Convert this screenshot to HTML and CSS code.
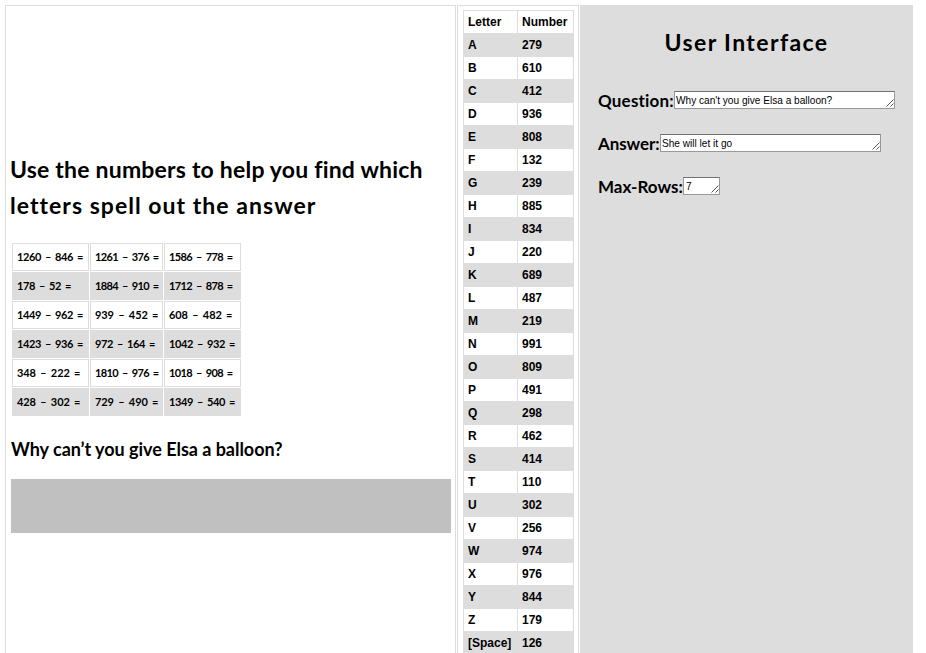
FILE: index.html
```
<!DOCTYPE html>
<html lang="en">
<head>
<meta charset="utf-8">
<title>Letter Puzzle</title>
<link rel="stylesheet" href="styles.css">
</head>
<body>
<main class="layout">
  <section class="puzzle">
    <h1><span class="line-one">Use the numbers to help you find which</span><br><span class="line-two">letters spell out the answer</span></h1>
    <table class="sums">
      <tr><td>1260 – 846 =</td><td class="tight">1261 – 376 =</td><td class="tight">1586 – 778 =</td></tr>
      <tr><td>178 – 52 =</td><td class="tight">1884 – 910 =</td><td class="tight">1712 – 878 =</td></tr>
      <tr><td>1449 – 962 =</td><td class="wide">939 – 452 =</td><td class="wide">608 – 482 =</td></tr>
      <tr><td>1423 – 936 =</td><td>972 – 164 =</td><td>1042 – 932 =</td></tr>
      <tr><td class="wide">348 – 222 =</td><td class="tight">1810 – 976 =</td><td class="tight">1018 – 908 =</td></tr>
      <tr><td class="wide">428 – 302 =</td><td class="wide">729 – 490 =</td><td>1349 – 540 =</td></tr>
    </table>
    <h2>Why can’t you give Elsa a balloon?</h2>
    <div class="answer-box"></div>
  </section>
  <section class="key">
    <table>
      <tr><th>Letter</th><th>Number</th></tr>
      <tr><td>A</td><td>279</td></tr>
      <tr><td>B</td><td>610</td></tr>
      <tr><td>C</td><td>412</td></tr>
      <tr><td>D</td><td>936</td></tr>
      <tr><td>E</td><td>808</td></tr>
      <tr><td>F</td><td>132</td></tr>
      <tr><td>G</td><td>239</td></tr>
      <tr><td>H</td><td>885</td></tr>
      <tr><td>I</td><td>834</td></tr>
      <tr><td>J</td><td>220</td></tr>
      <tr><td>K</td><td>689</td></tr>
      <tr><td>L</td><td>487</td></tr>
      <tr><td>M</td><td>219</td></tr>
      <tr><td>N</td><td>991</td></tr>
      <tr><td>O</td><td>809</td></tr>
      <tr><td>P</td><td>491</td></tr>
      <tr><td>Q</td><td>298</td></tr>
      <tr><td>R</td><td>462</td></tr>
      <tr><td>S</td><td>414</td></tr>
      <tr><td>T</td><td>110</td></tr>
      <tr><td>U</td><td>302</td></tr>
      <tr><td>V</td><td>256</td></tr>
      <tr><td>W</td><td>974</td></tr>
      <tr><td>X</td><td>976</td></tr>
      <tr><td>Y</td><td>844</td></tr>
      <tr><td>Z</td><td>179</td></tr>
      <tr><td>[Space]</td><td>126</td></tr>
    </table>
  </section>
  <section class="controls">
    <h1>User Interface</h1>
    <div class="field"><label class="l-question" for="q">Question:</label><div class="box"><textarea id="q" rows="1">Why can't you give Elsa a balloon?</textarea><svg class="grip" viewBox="0 0 8 8"><path d="M0.5 7.5L7.5 0.5M4.5 7.5L7.5 4.5"/></svg></div></div>
    <div class="field"><label class="l-answer" for="a">Answer:</label><div class="box"><textarea id="a" rows="1">She will let it go</textarea><svg class="grip" viewBox="0 0 8 8"><path d="M0.5 7.5L7.5 0.5M4.5 7.5L7.5 4.5"/></svg></div></div>
    <div class="field"><label class="l-rows" for="m">Max-Rows:</label><div class="box small"><textarea id="m" rows="1">7</textarea><svg class="grip" viewBox="0 0 8 8"><path d="M0.5 7.5L7.5 0.5M4.5 7.5L7.5 4.5"/></svg></div></div>
  </section>
</main>
</body>
</html>
```
FILE: styles.css
```
* { box-sizing: border-box; }
body { margin: 0; background: #fff; color: #000; overflow: hidden; font-family: Lato, sans-serif; }
h1, h2 { margin: 0; white-space: nowrap; }
.layout { display: flex; align-items: stretch; height: 653px; padding: 5px 0 0 5px; overflow: hidden; }
.puzzle { width: 451px; height: 660px; padding: 145px 4px 0 5px; border: 1px solid #ddd; }
.puzzle h1 { font-size: 23px; line-height: 36px; font-weight: 700; margin-left: -1px; }
.line-one { letter-spacing: 0.2px; }
.line-two { letter-spacing: 1.03px; }
.sums { margin-top: 19px; border-collapse: separate; border-spacing: 1px; table-layout: fixed; width: 231px; font-size: 11px; font-weight: 700; letter-spacing: -0.4px; word-spacing: 1.8px; }
.sums td { height: 28px; padding: 0 4px; border: 1px solid #ddd; white-space: nowrap; line-height: 16px; }
.sums td:nth-child(1), .sums td:nth-child(3) { width: 77px; }
.sums td:nth-child(2) { width: 73px; }
.sums tr:nth-child(even) td { background: #ddd; }
.sums .tight { letter-spacing: -0.6px; }
.sums .wide { letter-spacing: -0.1px; }
.puzzle h2 { margin-top: 19px; font-size: 18px; line-height: 26px; font-weight: 700; letter-spacing: -0.03px; }
.answer-box { height: 54px; margin-top: 17px; background: #c0c0c0; }
.key { width: 122px; height: 660px; margin-left: 1px; padding: 4px 0 0 5px; border: 1px solid #ddd; }
.key table { width: 111px; border-collapse: collapse; table-layout: fixed; font: bold 12px/14px "Liberation Sans", sans-serif; }
.key th, .key td { height: 23px; padding: 0 4px; border: 1px solid #ddd; text-align: left; }
.key th:first-child { width: 54px; }
.key tr:nth-child(even) td { background: #ddd; }
.controls { width: 333px; height: 660px; margin-left: 1px; padding: 19px 18px 0; background: #ddd; }
.controls h1 { font-size: 23px; line-height: 36px; text-align: center; letter-spacing: 1.4px; }
.field { display: flex; align-items: flex-start; height: 18px; margin-bottom: 25px; }
.controls h1 + .field { margin-top: 31px; }
.field label { flex: none; font-size: 17px; line-height: 20px; font-weight: 700; white-space: nowrap; }
.l-question { width: 76px; letter-spacing: 0.2px; }
.l-answer { width: 62px; letter-spacing: -0.1px; }
.l-rows { width: 85px; letter-spacing: 0; }
.box { position: relative; flex: none; width: 221px; height: 18px; }
.small { width: 37px; }
textarea { display: block; width: 100%; height: 18px; margin: 0; padding: 2px 1px; border: 1px solid #999; border-top-color: #707070; border-radius: 0; background: #fff; color: #000; font: 10.1px/13px "Liberation Sans", sans-serif; resize: none; overflow: hidden; outline: 0; }
.small textarea { padding-left: 2px; }
.grip { position: absolute; right: 1px; bottom: 2px; width: 8px; height: 8px; fill: none; stroke: #555; stroke-width: 1; }
```
